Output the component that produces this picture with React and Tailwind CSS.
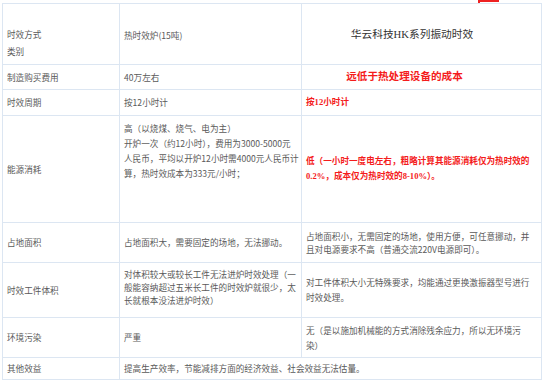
import React from 'react';

const base = 'border border-[#dce6f2] text-[#5a5a5a] align-middle';
const cell = `${base} pl-[4px] pr-[4px]`;
const red = "font-['Liberation_Serif','Noto_Sans_CJK_SC',serif] font-bold text-[#f41c1c]";

const Lines = ({ lines, lh = 'leading-[13px]' }) => (
  <div className={lh}>
    {lines.map((l, i) => (
      <div key={i} className="whitespace-nowrap">{l}</div>
    ))}
  </div>
);

export default function App() {
  return (
    <div className="relative w-[550px] h-[387px] bg-white overflow-hidden font-['Noto_Sans_CJK_SC',sans-serif] text-[8.6px]">
      {/* red mark cut off at top */}
      <div className="absolute left-[478px] top-0 w-[21px] h-[3px] border-l-2 border-t-2 border-[#ee2222]" />

      <table className="absolute left-[2px] top-[3px] table-fixed border-collapse w-[539px]">
        <colgroup>
          <col className="w-[117px]" />
          <col className="w-[182px]" />
          <col className="w-[240px]" />
        </colgroup>
        <tbody>
          <tr className="h-[61px]">
            <td className={`${base} pl-[4px] align-top pt-[22px]`}>
              <Lines lines={['时效方式', '类别']} lh="leading-[17px]" />
            </td>
            <td className={`${base} pl-[4px] align-top pt-[25px]`}>热时效炉(15吨)</td>
            <td className={`${base} pl-[4px] pr-[23px] text-center`}>
              <span className="text-[10.7px] text-[#333] font-['Liberation_Serif','Noto_Sans_CJK_SC',serif]">
                华云科技HK系列振动时效
              </span>
            </td>
          </tr>
          <tr className="h-[25px]">
            <td className={cell}>制造购买费用</td>
            <td className={cell}>40万左右</td>
            <td className={`${base} pl-[4px] pr-[38px] text-center`}>
              <span className={`text-[10.6px] ${red}`}>远低于热处理设备的成本</span>
            </td>
          </tr>
          <tr className="h-[26px]">
            <td className={cell}>时效周期</td>
            <td className={cell}>按12小时计</td>
            <td className={`${cell} ${red}`}>按12小时计</td>
          </tr>
          <tr className="h-[107px]">
            <td className={cell}>能源消耗</td>
            <td className={`${base} pl-[4px] align-top pt-[5px]`}>
              <Lines
                lh="leading-[15px]"
                lines={[
                  '高（以烧煤、烧气、电为主）',
                  '开炉一次（约12小时），费用为3000-5000元',
                  '人民币，平均以开炉12小时需4000元人民币计',
                  '算，热时效成本为333元/小时；',
                ]}
              />
            </td>
            <td className={`${cell} ${red}`}>
              <Lines
                lh="leading-[15px]"
                lines={['低（一小时一度电左右，粗略计算其能源消耗仅为热时效的', '0.2%，成本仅为热时效的8-10%）。']}
              />
            </td>
          </tr>
          <tr className="h-[40px]">
            <td className={cell}>占地面积</td>
            <td className={cell}>占地面积大，需要固定的场地，无法挪动。</td>
            <td className={cell}>
              <Lines
                lines={['占地面积小，无需固定的场地，使用方便，可任意挪动，并', '且对电源要求不高（普通交流220V电源即可）。']}
              />
            </td>
          </tr>
          <tr className="h-[55px]">
            <td className={cell}>时效工件体积</td>
            <td className={`${base} pl-[4px] pb-[6px]`}>
              <Lines
                lines={['对体积较大或较长工件无法进炉时效处理（一', '般能容纳超过五米长工件的时效炉就很少，太', '长就根本没法进炉时效）']}
              />
            </td>
            <td className={cell}>
              <Lines lh="leading-[15px]" lines={['对工件体积大小无特殊要求，均能通过更换激振器型号进行', '时效处理。']} />
            </td>
          </tr>
          <tr className="h-[40px]">
            <td className={cell}>环境污染</td>
            <td className={cell}>严重</td>
            <td className={cell}>
              <Lines lh="leading-[15px]" lines={['无（是以施加机械能的方式消除残余应力，所以无环境污', '染）']} />
            </td>
          </tr>
          <tr className="h-[22px]">
            <td className={cell}>其他效益</td>
            <td className={cell} colSpan={2}>提高生产效率，节能减排方面的经济效益、社会效益无法估量。</td>
          </tr>
        </tbody>
      </table>
    </div>
  );
}
